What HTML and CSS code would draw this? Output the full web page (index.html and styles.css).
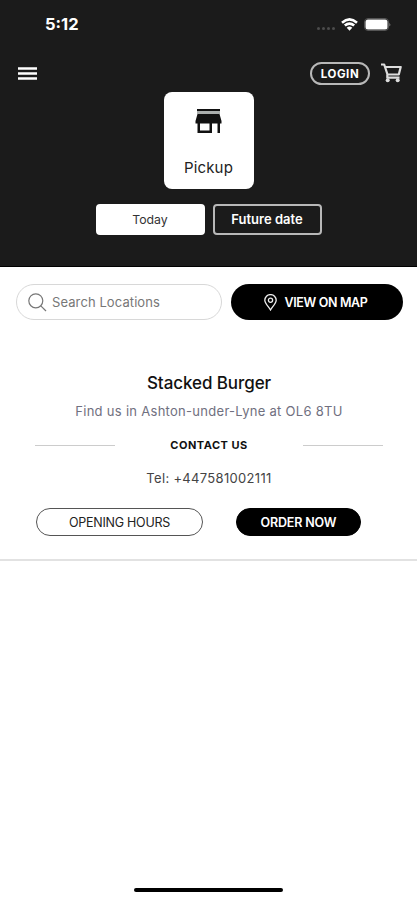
FILE: index.html
```html
<!DOCTYPE html>
<html lang="en">
<head>
<meta charset="utf-8">
<title>Stacked Burger</title>
<link rel="stylesheet" href="styles.css">
</head>
<body>
<header class="top">
  <div class="status">
    <span class="time">5:12</span>
    <span class="status-icons">
      <span class="dots"><i></i><i></i><i></i><i></i></span>
      <svg class="wifi" width="17" height="13" viewBox="0 0 17 13"><path fill="none" stroke="#fff" stroke-width="2.600" d="M1 4.700Q8.500-1.900 16 4.700M3.800 7.600Q8.500 3.500 13.200 7.600"/><path fill="#fff" d="M8.500 12.800 5.700 9.700Q8.500 7.400 11.300 9.700Z"/></svg>
      <svg class="battery" width="27" height="13" viewBox="0 0 27 13"><rect x=".5" y=".5" width="24" height="12" rx="3.500" fill="none" stroke="#555"/><rect x="1.500" y="1.500" width="22" height="10" rx="2.500" fill="#fff"/><path d="M25.500 4.500q1.500 2 0 4z" fill="#999"/></svg>
    </span>
  </div>
  <nav class="bar">
    <svg class="menu" width="19" height="13" viewBox="0 0 19 13"><path stroke="#fff" stroke-width="2.500" d="M0 1.500h19M0 6.500h19M0 11.500h19"/></svg>
    <a class="login">LOGIN</a>
    <svg class="cart" width="21" height="20" viewBox="0 0 21 20"><path fill="none" stroke="#ddd" stroke-width="2.200" stroke-linejoin="round" d="M0 1.500h3.200L6.500 11.500h11.300L19.700 4H4.200M6.300 11.500V14.700H18.500"/><circle cx="6.700" cy="17.300" r="2" fill="#ddd"/><circle cx="16.700" cy="17.300" r="2" fill="#ddd"/></svg>
  </nav>
  <div class="pickup">
    <svg width="28" height="24" viewBox="0 0 28 24"><path fill="#111" d="M2 0h23v2H2z"/><path fill="#aaaead" d="M2 2h23v3H2z"/><path fill="#111" d="M2.500 5h22L26.500 12v2.500h-1.500V24h-2.500v-9.500H17V24H2.500v-9.500H.5V12zM5 14.500v7h9.500v-7z"/></svg>
    <span class="pickup-label">Pickup</span>
  </div>
  <div class="dates">
    <a class="date active"><span>Today</span></a>
    <a class="date"><span>Future date</span></a>
  </div>
</header>
<main>
  <div class="search-row">
    <div class="search">
      <svg width="19" height="19" viewBox="0 0 19 19"><g fill="none" stroke="#777" stroke-width="1.200"><circle cx="7.800" cy="7.800" r="7"/><path d="m12.800 12.800 5.200 5.200"/></g></svg>
      <span>Search Locations</span>
    </div>
    <a class="map">
      <svg width="13" height="17" viewBox="0 0 13 17"><g fill="none" stroke="#eee" stroke-width="1.300"><path d="M6.500 16C4.500 12.500.8 9.500.8 6.300a5.700 5.700 0 0 1 11.400 0C12.200 9.500 8.500 12.500 6.500 16Z"/><circle cx="6.500" cy="6.300" r="2.100"/></g></svg>
      <span>VIEW ON MAP</span>
    </a>
  </div>
  <section class="store">
    <h1>Stacked Burger</h1>
    <p class="address">Find us in Ashton-under-Lyne at OL6 8TU</p>
    <div class="contact"><span>CONTACT US</span></div>
    <p class="tel">Tel: +447581002111</p>
    <div class="actions">
      <a class="hours"><span>OPENING HOURS</span></a>
      <a class="order"><span>ORDER NOW</span></a>
    </div>
  </section>
</main>
<footer><div class="home"></div></footer>
</body>
</html>
```
FILE: styles.css
```css
* { box-sizing: border-box; }
body { margin: 0; width: 417px; height: 900px; display: flex; flex-direction: column; background: #fff; font-family: Inter, "Liberation Sans", sans-serif; font-size: 13px; color: #222; overflow: hidden; }
svg { display: block; flex: none; }
h1, p { margin: 0; }
span { white-space: nowrap; }
.top { height: 267px; background: #1b1b1b; border-bottom: 1px solid #000; color: #fff; display: flex; flex-direction: column; align-items: center; }
.status { width: 100%; height: 48px; padding: 0 26px 0 45px; display: flex; justify-content: space-between; align-items: center; }
.time { font-size: 16.500px; font-weight: 700; line-height: 20px; }
.status-icons { display: flex; align-items: center; }
.dots { display: flex; gap: 2px; margin: 9px 6px 0 0; }
.dots i { width: 3px; height: 3px; border-radius: 2px; background: #4c4c4c; }
.wifi { margin-right: 6px; }
.bar { width: 100%; height: 44px; padding: 6px 15px 0 18px; display: flex; align-items: flex-start; }
.menu { margin: 13px auto 0 0; }
.login { width: 60px; height: 23px; margin: 8px 11px 0 0; border: 2px solid #b8b8b8; border-radius: 12px; display: flex; align-items: center; justify-content: center; font-size: 11.500px; font-weight: 700; letter-spacing: .6px; }
.cart { margin-top: 9px; }
.pickup { width: 90px; height: 97px; background: #fff; border-radius: 8px; padding-top: 17px; color: #222; display: flex; flex-direction: column; align-items: center; }
.pickup-label { margin-top: 25px; font-size: 15px; line-height: 20px; letter-spacing: .15px; }
.dates { display: flex; gap: 8px; margin-top: 15px; }
.date { width: 109px; height: 31px; border: 2px solid #b8b8b8; border-radius: 4px; padding-bottom: 1px; display: flex; align-items: center; justify-content: center; font-weight: 600; }
.active { background: #fff; border-color: #fff; color: #333; font-weight: 400; font-size: 12.300px; }
.search-row { display: flex; gap: 9px; padding: 17px 14px 0 16px; }
.search { width: 206px; height: 36px; border: 1px solid #d8d8d8; border-radius: 18px; padding-left: 11px; display: flex; align-items: center; gap: 5px; color: #777; letter-spacing: .09px; }
.map { width: 172px; height: 36px; background: #000; border-radius: 18px; padding-right: 2px; display: flex; align-items: center; justify-content: center; gap: 7px; color: #fff; font-size: 12.500px; font-weight: 600; letter-spacing: -.35px; }
.store { margin-top: 40px; height: 201px; border-bottom: 2px solid #e2e2e2; padding: 12px 34px 0 35px; display: flex; flex-direction: column; align-items: center; }
h1 { font-size: 17px; font-weight: 500; line-height: 22px; letter-spacing: -.08px; color: #111; }
.address { margin-top: 8px; line-height: 18px; letter-spacing: .29px; color: #707080; white-space: nowrap; }
.contact { width: 100%; height: 16px; margin-top: 17px; display: flex; align-items: center; justify-content: space-between; font-size: 11px; font-weight: 700; letter-spacing: .5px; color: #111; }
.contact::before, .contact::after { content: ""; width: 80px; height: 1px; background: #ccc; }
.tel { margin-top: 16px; line-height: 18px; letter-spacing: .32px; color: #444; }
.actions { width: 100%; padding-left: 1px; margin-top: 21px; display: flex; gap: 33px; }
.hours, .order { height: 28px; border: 1px solid #555; border-radius: 14px; display: flex; align-items: center; justify-content: center; font-size: 12.500px; }
.hours { width: 167px; letter-spacing: -.25px; }
.order { width: 125px; border-color: #000; background: #000; color: #fff; font-weight: 600; letter-spacing: -.15px; }
footer { margin-top: auto; height: 12px; display: flex; justify-content: center; }
.home { width: 149px; height: 4px; border-radius: 2px; background: #000; }
```
